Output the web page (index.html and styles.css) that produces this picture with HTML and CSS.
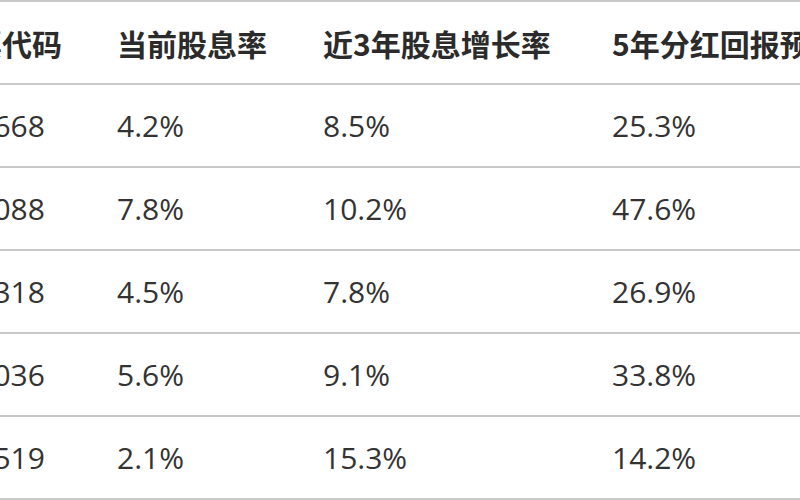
FILE: index.html
```html
<!DOCTYPE html>
<html lang="zh-CN">
<head>
<meta charset="utf-8">
<link rel="stylesheet" href="styles.css">
</head>
<body>
<div class="viewport">
  <div class="table">
    <div class="row head">
      <div class="cell">股票代码</div>
      <div class="cell">当前股息率</div>
      <div class="cell">近3年股息增长率</div>
      <div class="cell">5年分红回报预期</div>
    </div>
    <div class="row">
      <div class="cell">600668</div>
      <div class="cell">4.2%</div>
      <div class="cell">8.5%</div>
      <div class="cell">25.3%</div>
    </div>
    <div class="row">
      <div class="cell">601088</div>
      <div class="cell">7.8%</div>
      <div class="cell">10.2%</div>
      <div class="cell">47.6%</div>
    </div>
    <div class="row">
      <div class="cell">600318</div>
      <div class="cell">4.5%</div>
      <div class="cell">7.8%</div>
      <div class="cell">26.9%</div>
    </div>
    <div class="row">
      <div class="cell">000036</div>
      <div class="cell">5.6%</div>
      <div class="cell">9.1%</div>
      <div class="cell">33.8%</div>
    </div>
    <div class="row last">
      <div class="cell">600519</div>
      <div class="cell">2.1%</div>
      <div class="cell">15.3%</div>
      <div class="cell">14.2%</div>
    </div>
  </div>
</div>
</body>
</html>
```
FILE: styles.css
```css
html, body {
  margin: 0;
  padding: 0;
  background: #ffffff;
}
.viewport {
  width: 800px;
  height: 500px;
  overflow: hidden;
}
.table {
  margin-left: -58px;
  width: 1000px;
  font-family: "Open Sans", "Noto Sans CJK SC", sans-serif;
  font-size: 30px;
  color: #333333;
}
.row {
  display: grid;
  grid-template-columns: 175px 206px 289px 330px;
  height: 81px;
  border-top: 2px solid #c9c9c9;
  align-items: center;
}
.row.last {
  border-bottom: 2px solid #c9c9c9;
}
.cell {
  white-space: nowrap;
  line-height: 1;
}
.head .cell {
  font-family: "Noto Sans CJK SC", "Open Sans", sans-serif;
  font-weight: 700;
  color: #2b2b2b;
}
```
